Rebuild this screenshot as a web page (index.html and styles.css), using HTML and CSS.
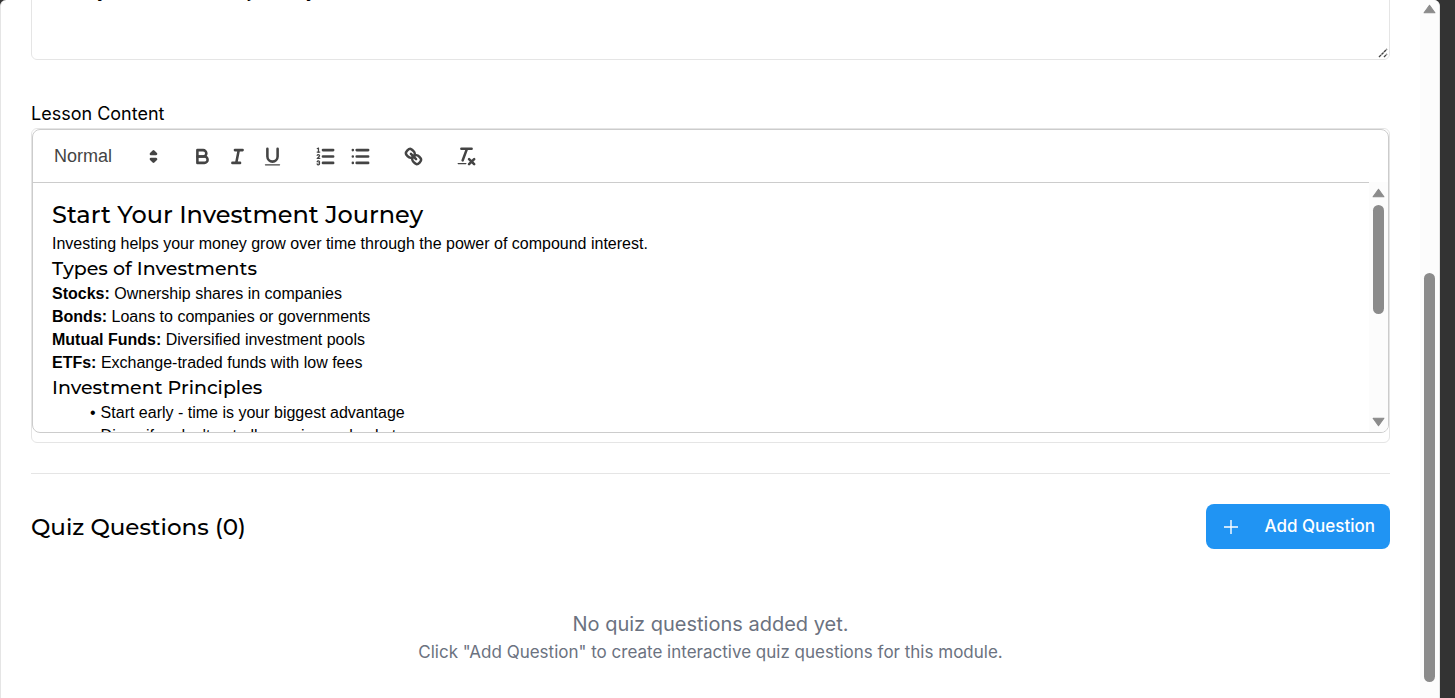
FILE: index.html
```html
<!DOCTYPE html>
<html lang="en">
<head>
<meta charset="utf-8">
<title>Edit Module</title>
<link rel="stylesheet" href="styles.css">
</head>
<body>
<main class="dialog">
  <div class="dialog-body">
    <div class="summary-box">
      <textarea class="summary" aria-label="Description">Start your investment journey</textarea>
      <svg class="grip" viewBox="0 0 10 10" aria-hidden="true"><path d="M1 9L9 1M6 9L9 6"/></svg>
    </div>

    <section class="field">
      <h3 class="field-label" id="lesson-label">Lesson Content</h3>
      <div class="editor-frame">
        <div class="editor">
          <div class="toolbar" role="toolbar" aria-label="Formatting">
            <label class="picker">
              <select class="picker-select" aria-label="Text style"><option>Normal</option><option>Heading 1</option><option>Heading 2</option></select>
              <svg class="icon picker-arrows" viewBox="0 0 18 18"><polygon class="solid" points="7 11 9 13 11 11 7 11"/><polygon class="solid" points="7 7 9 5 11 7 7 7"/></svg>
            </label>
            <div class="tool-group">
              <button class="tool" type="button" aria-label="Bold"><svg class="icon" viewBox="0 0 18 18"><path d="M5,4H9.5A2.5,2.5,0,0,1,12,6.5v0A2.5,2.5,0,0,1,9.5,9H5V4Z"/><path d="M5,9h5.5A2.5,2.5,0,0,1,13,11.5v0A2.5,2.5,0,0,1,10.5,14H5V9Z"/></svg></button>
              <button class="tool" type="button" aria-label="Italic"><svg class="icon" viewBox="0 0 18 18"><path d="M7,4H13M5,14H11M8,14L10,4"/></svg></button>
              <button class="tool" type="button" aria-label="Underline"><svg class="icon" viewBox="0 0 18 18"><path d="M5,3V9a4.012,4.012,0,0,0,4,4H9a4.012,4.012,0,0,0,4-4V3"/><rect class="fill" x="3" y="15" width="12" height="1" rx="0.5"/></svg></button>
            </div>
            <div class="tool-group">
              <button class="tool" type="button" aria-label="Numbered list"><svg class="icon" viewBox="0 0 18 18"><path d="M7,4H15M7,9H15M7,14H15"/><path class="thin" d="M2.5,5.5H4.5"/><path class="fill" d="M3.5,6A0.5,0.5,0,0,1,3,5.5V3.085l-0.276.138A0.5,0.5,0,0,1,2.053,3c-0.124-.247-0.023-0.324.224-0.447l1-.5A0.5,0.5,0,0,1,4,2.5v3A0.5,0.5,0,0,1,3.5,6Z"/><path class="thin" d="M4.5,10.5h-2c0-.234,1.85-1.076,1.85-2.234A0.959,0.959,0,0,0,2.5,8.156"/><path class="thin" d="M2.5,14.846a0.959,0.959,0,0,0,1.85-.109A0.7,0.7,0,0,0,3.75,14a0.688,0.688,0,0,0,.6-0.736,0.959,0.959,0,0,0-1.85-.109"/></svg></button>
              <button class="tool" type="button" aria-label="Bulleted list"><svg class="icon" viewBox="0 0 18 18"><path d="M6,4H15M6,9H15M6,14H15M3,4H3M3,9H3M3,14H3"/></svg></button>
            </div>
            <div class="tool-group">
              <button class="tool" type="button" aria-label="Link"><svg class="icon" viewBox="0 0 18 18"><path d="M7,7L11,11"/><path d="M8.9,4.577a3.476,3.476,0,0,1,.36,4.679A3.476,3.476,0,0,1,4.577,8.9C3.185,7.5,2.035,6.4,4.217,4.217S7.5,3.185,8.9,4.577Z"/><path d="M13.423,9.1a3.476,3.476,0,0,0-4.679-.36,3.476,3.476,0,0,0,.36,4.679c1.392,1.392,2.5,2.542,4.679.36S14.815,10.5,13.423,9.1Z"/></svg></button>
            </div>
            <div class="tool-group">
              <button class="tool" type="button" aria-label="Clear formatting"><svg class="icon" viewBox="0 0 18 18"><path d="M5,3H13M6,12L9.35,3M11,11L15,15M15,11L11,15"/><rect class="fill" x="2" y="14" width="7" height="1" rx="0.5"/></svg></button>
            </div>
          </div>
          <div class="editor-view">
            <div class="content" contenteditable="true" role="textbox" aria-multiline="true" aria-labelledby="lesson-label" spellcheck="false">
              <h2>Start Your Investment Journey</h2>
              <p>Investing helps your money grow over time through the power of compound interest.</p>
              <h3>Types of Investments</h3>
              <p><strong>Stocks:</strong> Ownership shares in companies</p>
              <p><strong>Bonds:</strong> Loans to companies or governments</p>
              <p><strong>Mutual Funds:</strong> Diversified investment pools</p>
              <p><strong>ETFs:</strong> Exchange-traded funds with low fees</p>
              <h3>Investment Principles</h3>
              <ul>
                <li>Start early - time is your biggest advantage</li>
                <li>Diversify - don't put all eggs in one basket</li>
              </ul>
            </div>
            <div class="scrollbar editor-scrollbar" aria-hidden="true">
              <svg class="scroll-arrow" viewBox="0 0 12 9"><path d="M6 1L11 8H1Z"/></svg>
              <div class="scroll-lane"><div class="thumb thumb-editor"></div></div>
              <svg class="scroll-arrow" viewBox="0 0 12 9"><path d="M6 8L11 1H1Z"/></svg>
            </div>
          </div>
        </div>
      </div>
    </section>

    <section class="quiz">
      <header class="quiz-header">
        <h2 class="quiz-title">Quiz Questions (0)</h2>
        <button class="add-button" type="button"><svg class="plus" viewBox="0 0 14 14"><path d="M7 0V14M0 7H14"/></svg>Add Question</button>
      </header>
      <div class="empty">
        <p class="empty-title">No quiz questions added yet.</p>
        <p class="empty-hint">Click "Add Question" to create interactive quiz questions for this module.</p>
      </div>
    </section>
  </div>
  <div class="scrollbar page-scrollbar" aria-hidden="true">
    <svg class="scroll-arrow" viewBox="0 0 12 9"><path d="M6 1L11 8H1Z"/></svg>
    <div class="scroll-lane"><div class="thumb thumb-page"></div></div>
  </div>
</main>
</body>
</html>
```
FILE: styles.css
```css
* { box-sizing: border-box; }

body {
  margin: 0;
  background: #333;
  color: #000;
  font-family: Inter, sans-serif;
  overflow: hidden;
}

h2, h3, p, ul { margin: 0; padding: 0; font-weight: 400; }

.dialog {
  display: flex;
  height: 100vh;
  margin-right: 15px;
  background: #fff;
  border: 1px solid #e5e5e5;
  border-width: 0 1px;
  border-radius: 6px 6px 0 0;
  overflow: hidden;
}

.dialog-body {
  flex: 1;
  min-width: 0;
  padding: 0 30px;
}

.summary-box {
  position: relative;
  margin-top: -40px;
}

.summary {
  display: block;
  width: 100%;
  height: 100px;
  padding: 17px 16px;
  border: 1px solid #e5e5e5;
  border-radius: 6px;
  background: #fff;
  color: #000;
  font: 500 19px/25px Inter, sans-serif;
  resize: none;
  overflow: hidden;
}

.grip {
  position: absolute;
  right: 2px;
  bottom: 2px;
  width: 10px;
  height: 10px;
  fill: none;
  stroke: #444;
  stroke-width: 1.4;
  stroke-dasharray: 3 0.5;
}

.field { margin-top: 40px; }

.field-label {
  font-size: 18px;
  line-height: 28px;
}

.editor-frame {
  padding: 0 0 9px;
  border: 1px solid #e5e5e5;
  border-radius: 6px;
}

.editor {
  border: 1px solid #ccc;
  border-radius: 8px;
  overflow: hidden;
  font-family: "Liberation Sans", Arial, sans-serif;
}

.toolbar {
  display: flex;
  align-items: center;
  gap: 18px;
  height: 52px;
  padding: 0 10px;
}

.picker {
  position: relative;
  display: flex;
  align-items: center;
  width: 124px;
}

.picker-select {
  appearance: none;
  width: 100%;
  padding: 0 11px;
  border: 0;
  background: transparent;
  color: #444;
  font: 400 18px/30px "Liberation Sans", Arial, sans-serif;
}

.picker-arrows {
  position: absolute;
  right: 2px;
  pointer-events: none;
}

.tool-group { display: flex; }

.tool {
  display: grid;
  place-items: center;
  width: 35px;
  height: 30px;
  padding: 0;
  border: 0;
  background: none;
}

.icon {
  width: 23px;
  height: 23px;
  fill: none;
  stroke: #444;
  stroke-width: 2;
  stroke-linecap: round;
  stroke-linejoin: round;
}

.icon .thin { stroke-width: 1; }
.icon .fill { fill: #444; stroke: none; }
.icon .solid { fill: #444; }

.editor-view {
  display: flex;
  height: 250px;
}

.content {
  flex: 1;
  padding: 15px 19px;
  border-top: 1px solid #ccc;
  overflow: hidden;
  outline: none;
  font-size: 16px;
  line-height: 23px;
}

.content h2 { font: 500 24px/34px Montserrat, sans-serif; }
.content h3 { font: 500 19px/27px Montserrat, sans-serif; }

.content ul { padding-left: 38px; list-style: none; }

.content li::before { content: "•"; margin-right: 5px; }

.scrollbar {
  display: flex;
  flex-direction: column;
  align-items: center;
  width: 19px;
  background: #fcfcfc;
}

.scroll-arrow {
  width: 13px;
  height: 10px;
  fill: #8b8b8b;
  stroke: #8b8b8b;
  stroke-linejoin: round;
}

.scroll-lane { flex: 1; }

.thumb {
  width: 11px;
  border-radius: 6px;
  background: #8b8b8b;
}

.editor-scrollbar { padding: 6px 0 5px; gap: 7px; }
.page-scrollbar { padding: 4px 0 16px; }

.thumb-editor { height: 109px; }

.page-scrollbar .scroll-lane {
  display: flex;
  flex-direction: column;
  justify-content: flex-end;
}

.thumb-page { height: 61.3%; }

.quiz {
  margin-top: 30px;
  padding-top: 30px;
  border-top: 1px solid #e5e5e5;
}

.quiz-header {
  display: flex;
  align-items: center;
  justify-content: space-between;
}

.quiz-title { font: 500 23px/30px Montserrat, sans-serif; }

.add-button {
  display: flex;
  align-items: center;
  gap: 27px;
  height: 45px;
  padding: 0 15px 0 18px;
  border: 0;
  border-radius: 8px;
  background: #2094f3;
  color: #fff;
  font: 500 17px/25px Inter, sans-serif;
}

.plus {
  width: 14px;
  height: 14px;
  stroke: #fff;
  stroke-width: 1.4;
}

.empty {
  padding: 60px 0;
  color: #6b7280;
  text-align: center;
}

.empty-title { font-size: 20px; line-height: 30px; }
.empty-hint { font-size: 17px; line-height: 26px; }
```
